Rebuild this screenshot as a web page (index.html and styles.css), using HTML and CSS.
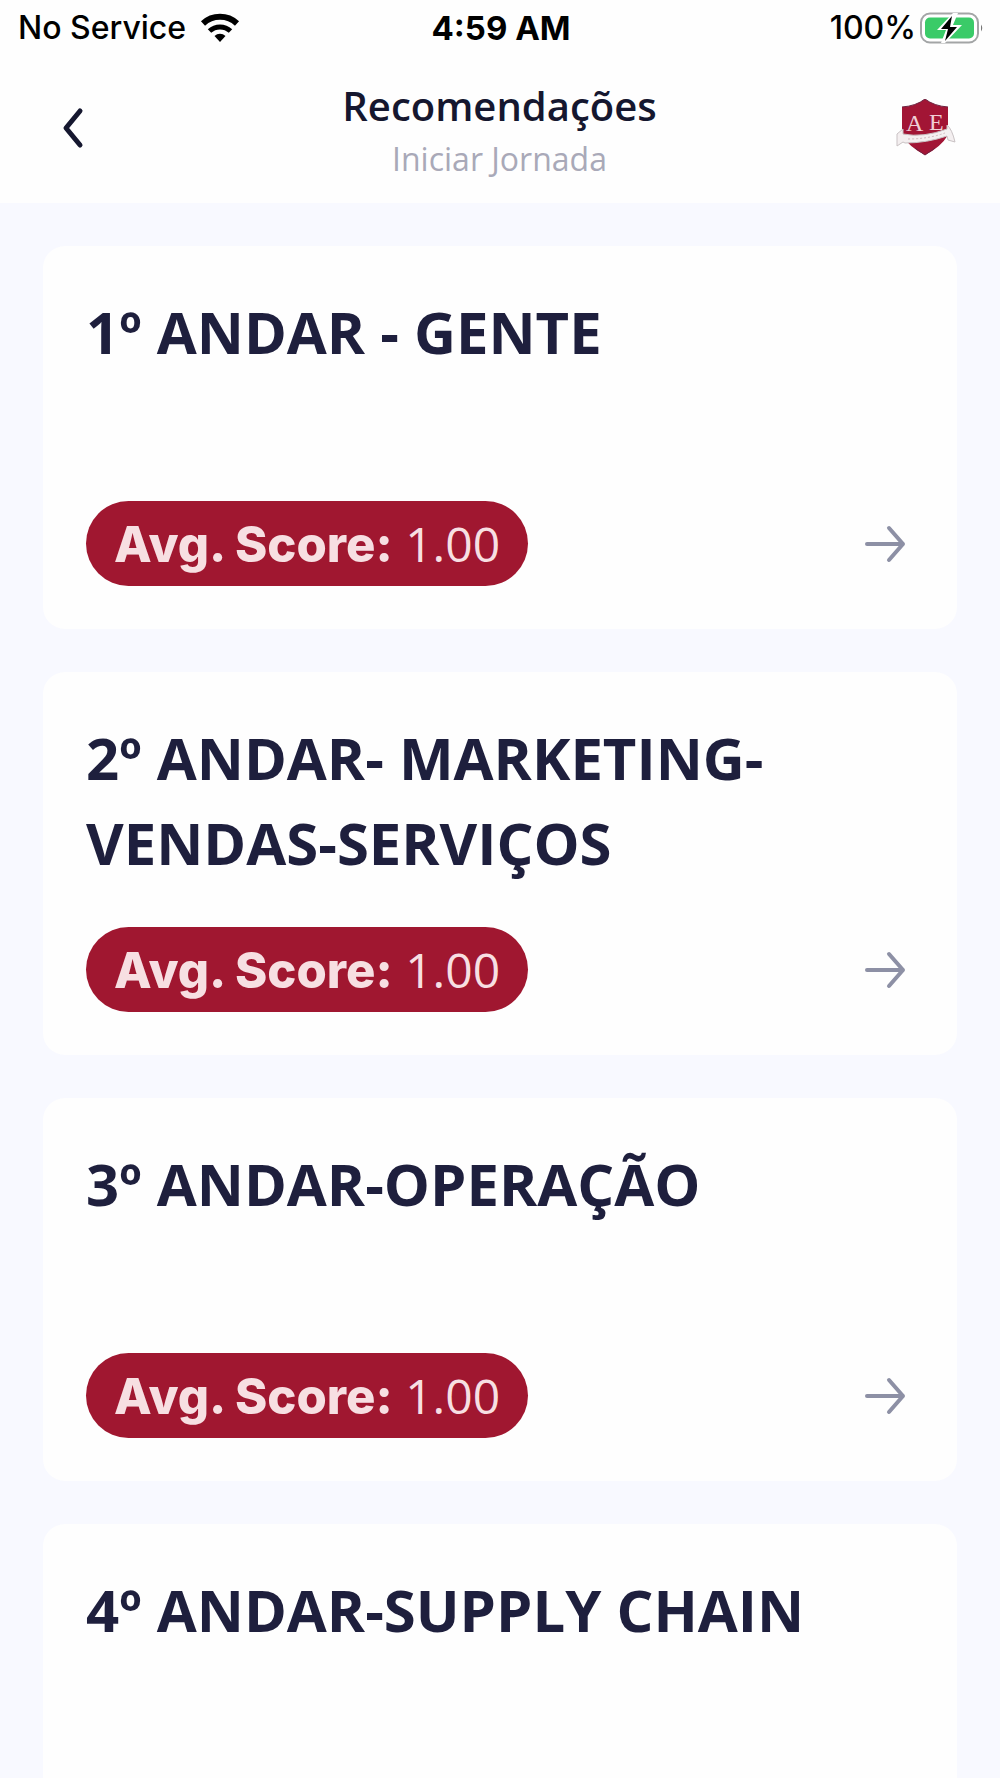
FILE: index.html
```html
<!DOCTYPE html>
<html lang="pt-BR">
<head>
    <meta charset="UTF-8">
    <meta name="viewport" content="width=device-width, initial-scale=1">
    <title>Recomendações</title>
    <link rel="stylesheet" href="styles.css">
</head>
<body>
<div class="top">
    <div class="status">
        <div class="status-left">
            <span>No Service</span>
            <svg class="wifi" width="40" height="30" viewBox="0 0 40 30">
                <path d="M3 10.500A25 25 0 0 1 37 10.500" fill="none" stroke="#000" stroke-width="6"/>
                <path d="M9.500 18A15.500 15.500 0 0 1 30.500 18" fill="none" stroke="#000" stroke-width="5"/>
                <path d="M20 29l-5.500-6a8 8 0 0 1 11 0z"/>
            </svg>
        </div>
        <div class="time">4:59 AM</div>
        <div class="status-right">
            <span>100%</span>
            <svg class="battery" width="64" height="32" viewBox="0 0 64 32">
                <rect x="1" y="1.500" width="57" height="29" rx="9" fill="#fff" stroke="#a3a5a6" stroke-width="2"/>
                <rect x="5" y="5.500" width="49" height="21" rx="5" fill="#3acb68"/>
                <path d="M61 12.500q2.500 3.500 0 7z" fill="#777"/>
                <path d="M33 1L17 18h9l-5 13h4l17-18h-9l5-12z" fill="#fff"/>
                <path d="M32 4L21 17h7l-3 12 12-14h-7z"/>
            </svg>
        </div>
    </div>
    <header class="header">
        <button class="back" type="button" aria-label="Voltar">
            <svg width="24" height="42" viewBox="0 0 24 42">
                <path d="M19 4L5 21l14 17" fill="none" stroke="#15172f" stroke-width="5" stroke-linecap="round" stroke-linejoin="round"/>
            </svg>
        </button>
        <div class="heading">
            <h1>Recomendações</h1>
            <p>Iniciar Jornada</p>
        </div>
        <svg class="logo" width="60" height="58" viewBox="0 0 60 58">
            <path d="M29 0q9 7 23 8v28q-7 12-23 20Q13 48 6 36V8Q20 7 29 0z" fill="#a21535"/>
            <path d="M29 0q9 7 23 8M29 0Q20 7 6 8M19 49l10 7 10-7" fill="none" stroke="#6d2340"/>
            <text x="10" y="32">A</text>
            <text x="33" y="31">E</text>
            <path d="M1 35l6-5v5q20 4 44-5v-4q5 4 8 17l-7-2-1-4q-20 7-42 7l-2-1-6 4z" fill="#f4eff0" stroke="#c9c2c4" stroke-width="1"/>
            <path d="M12 40q20 0 37-6" fill="none" stroke="#cfb9be" stroke-dasharray="2 2"/>
        </svg>
    </header>
</div>
<main class="list">
    <a class="card" href="#">
        <h2>1º ANDAR - GENTE</h2>
        <div class="card-foot">
            <span class="score"><b>Avg. Score:</b> 1.00</span>
            <svg class="arrow" width="42" height="38" viewBox="0 0 42 38">
                <path d="M3 19h36M25 3l14 16-14 16" fill="none" stroke="#8d90a5" stroke-width="4" stroke-linecap="round" stroke-linejoin="round"/>
            </svg>
        </div>
    </a>
    <a class="card" href="#">
        <h2>2º ANDAR- MARKETING-VENDAS-SERVIÇOS</h2>
        <div class="card-foot">
            <span class="score"><b>Avg. Score:</b> 1.00</span>
            <svg class="arrow" width="42" height="38" viewBox="0 0 42 38">
                <path d="M3 19h36M25 3l14 16-14 16" fill="none" stroke="#8d90a5" stroke-width="4" stroke-linecap="round" stroke-linejoin="round"/>
            </svg>
        </div>
    </a>
    <a class="card" href="#">
        <h2>3º ANDAR-OPERAÇÃO</h2>
        <div class="card-foot">
            <span class="score"><b>Avg. Score:</b> 1.00</span>
            <svg class="arrow" width="42" height="38" viewBox="0 0 42 38">
                <path d="M3 19h36M25 3l14 16-14 16" fill="none" stroke="#8d90a5" stroke-width="4" stroke-linecap="round" stroke-linejoin="round"/>
            </svg>
        </div>
    </a>
    <a class="card" href="#">
        <h2>4º ANDAR-SUPPLY CHAIN</h2>
    </a>
</main>
</body>
</html>
```

FILE: styles.css
```css
*{
    margin: 0;
    padding: 0;
    box-sizing: border-box;
}
body{
    height: 100vh;
    display: flex;
    flex-direction: column;
    background: #f8f9ff;
    color: #1e1f3d;
    font-family: "Open Sans", "Noto Sans", sans-serif;
}
a{
    color: inherit;
    text-decoration: none;
}
svg{
    display: block;
    flex: none;
}
.top{
    flex: none;
    background: #fefefe;
}

/* status bar */
.status{
    display: grid;
    grid-template-columns: 1fr auto 1fr;
    align-items: center;
    height: 56px;
    padding: 0 16px 0 18px;
    color: #000;
    font: 500 32px/38px Inter, "Liberation Sans", sans-serif;
}
.status-left,.status-right{
    display: flex;
    align-items: center;
}
.status-left{
    gap: 14px;
}
.status-right{
    justify-content: flex-end;
    gap: 4px;
}
.time{
    font-weight: 700;
    font-size: 33px;
}

/* header */
.header{
    display: grid;
    grid-template-columns: 1fr auto 1fr;
    align-items: center;
    height: 147px;
    padding: 0 44px 4px 43px;
}
.back{
    justify-self: start;
    padding: 10px 18px;
    border: none;
    background: none;
    cursor: pointer;
}
.heading{
    padding-top: 8px;
    text-align: center;
}
.heading h1{
    color: #15172f;
    font-size: 40px;
    font-weight: 600;
    line-height: 54px;
}
.heading p{
    color: #a9a9b8;
    font-size: 32px;
    line-height: 52px;
}
.logo{
    justify-self: end;
}
.logo text{
    fill: #f0cfd6;
    font: 24px "Liberation Serif", serif;
}

/* cards */
.list{
    flex: 1;
    min-height: 0;
    display: flex;
    flex-direction: column;
    gap: 43px;
    padding: 43px;
    overflow-y: auto;
    scrollbar-width: none;
}
.card{
    flex: none;
    min-height: 383px;
    padding: 43px;
    border-radius: 22px;
    background: #fefefe;
}
.card h2{
    min-height: 170px;
    margin-bottom: 42px;
    font-size: 58px;
    font-weight: 700;
    line-height: 85px;
}
.card-foot{
    display: flex;
    align-items: center;
    justify-content: space-between;
    padding-right: 8px;
}
.score{
    height: 85px;
    padding: 0 28px;
    border-radius: 43px;
    background: #a01730;
    color: #f7dfe2;
    font-size: 48px;
    font-weight: 400;
    line-height: 85px;
}
.score b{
    font-family: Inter, "Liberation Sans", sans-serif;
    font-size: 49px;
    font-weight: 800;
}
```
